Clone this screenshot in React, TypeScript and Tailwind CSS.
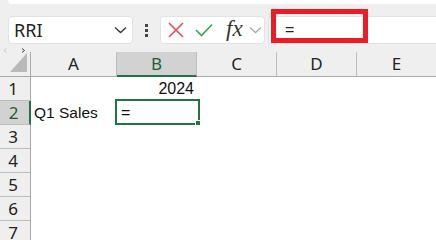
import React from "react";

const cols = [
  { l: "A", w: "w-[86px]" },
  { l: "B", w: "w-[80px]" },
  { l: "C", w: "w-[80px]" },
  { l: "D", w: "w-[80px]" },
  { l: "E", w: "w-[80px]" },
];

export default function App() {
  const rows = [1, 2, 3, 4, 5, 6, 7];
  return (
    <div className="w-[436px] h-[240px] overflow-hidden bg-[#efefef] relative font-['Noto_Sans',sans-serif]">
      <div className="ml-[8px] h-[4px] bg-white rounded-bl-[6px]" />
      {/* formula bar */}
      <div className="flex items-start h-[28px] mt-[12px]">
        <div className="ml-[8px] w-[125px] h-[28px] bg-white rounded-[4px] border border-[#e2e2e2] flex items-center justify-between pl-[5px] pr-[5px]">
          <span className="text-[18px] text-[#222] leading-none">RRI</span>
          <svg width="13" height="8" viewBox="0 0 13 8">
            <path d="M1 1.5 L6.5 6.5 L12 1.5" fill="none" stroke="#333" strokeWidth="1.3" />
          </svg>
        </div>
        <div className="w-[27px] h-[28px] flex flex-col items-center justify-center gap-[2px]">
          <div className="w-[3px] h-[3px] bg-[#444]" />
          <div className="w-[3px] h-[3px] bg-[#444]" />
          <div className="w-[3px] h-[3px] bg-[#444]" />
        </div>
        <div className="w-[105px] h-[28px] bg-white rounded-[4px] border border-[#e2e2e2] flex items-center pl-[7px]">
          <svg width="16" height="16" viewBox="0 0 16 16">
            <path d="M1 1 L15 15 M15 1 L1 15" stroke="#e5484d" strokeWidth="1.5" fill="none" />
          </svg>
          <svg width="18" height="14" viewBox="0 0 18 14" className="ml-[11px]">
            <path d="M1 7 L6.5 12.5 L17 1.5" stroke="#3da34a" strokeWidth="1.6" fill="none" />
          </svg>
          <span className="ml-[13px] font-['Liberation_Serif',serif] italic text-[23px] leading-none text-[#333] -mt-[3px]">fx</span>
          <svg width="13" height="8" viewBox="0 0 13 8" className="ml-[6px]">
            <path d="M1 1.5 L6.5 6.5 L12 1.5" fill="none" stroke="#a8a8a8" strokeWidth="1.3" />
          </svg>
        </div>
        <div className="ml-[3px] flex-1 h-[28px] bg-white rounded-l-[4px] border border-[#e2e2e2] border-r-0 flex items-center pl-[16px]">
          <span className="font-['Liberation_Sans',sans-serif] text-[16px] text-[#222]">=</span>
        </div>
      </div>
      <div className="absolute left-[271px] top-[9px] w-[97px] h-[34px] border-[5px] border-[#ed1c24]" />
      {/* scroll arrows */}
      <div className="h-[8px] relative">
        <svg width="5" height="5" viewBox="0 0 5 5" className="absolute left-[3px] top-[4px]">
          <path d="M3.5 0.5 L1 2.5 L3.5 4.5" stroke="#c4c4c4" strokeWidth="1" fill="none" />
        </svg>
        <svg width="5" height="5" viewBox="0 0 5 5" className="absolute left-[21px] top-[4px]">
          <path d="M1 0.5 L3.5 2.5 L1 4.5" stroke="#444" strokeWidth="1" fill="none" />
        </svg>
      </div>
      {/* header row */}
      <div className="flex h-[25px]">
        <div className="w-[31px] h-[25px] border-r border-b border-[#a9a9a9] bg-[#efefef]">
          <svg width="30" height="24" viewBox="0 0 30 24">
            <polygon points="27,1 27,20 10,20" fill="#b9b9b9" />
          </svg>
        </div>
        {cols.map((c) =>
          c.l === "B" ? (
            <div key={c.l} className={`${c.w} h-[25px] shrink-0 bg-[#d2d2d2] border-r border-r-[#bdbdbd] border-b-2 border-b-[#217346] flex items-center justify-center text-[17px] text-[#1d5e38]`}>
              {c.l}
            </div>
          ) : (
            <div key={c.l} className={`${c.w} h-[25px] shrink-0 bg-[#efefef] border-r border-r-[#bdbdbd] border-b border-b-[#a9a9a9] flex items-center justify-center text-[17px] text-[#222]`}>
              {c.l}
            </div>
          )
        )}
      </div>
      {/* rows */}
      {rows.map((r) => (
        <div key={r} className="flex h-[24px] bg-white">
          {r === 2 ? (
            <div className="w-[31px] h-[24px] shrink-0 bg-[#d2d2d2] border-r-2 border-r-[#217346] border-b border-b-[#bdbdbd] flex items-center justify-center pr-[2px] text-[17px] text-[#1d5e38]">
              {r}
            </div>
          ) : (
            <div className="w-[31px] h-[24px] shrink-0 bg-[#efefef] border-r border-r-[#a9a9a9] border-b border-b-[#bdbdbd] flex items-center justify-center pr-[4px] text-[17px] text-[#222]">
              {r}
            </div>
          )}
          <div className="w-[86px] h-[24px] shrink-0 flex items-center pl-[3px] font-['Liberation_Sans',sans-serif] text-[15.5px] text-[#111]">
            {r === 2 ? "Q1 Sales" : ""}
          </div>
          <div className="w-[80px] h-[24px] shrink-0 relative flex items-center font-['Liberation_Sans',sans-serif] text-[16px] text-[#111]">
            {r === 1 && <span className="ml-auto pr-[3px]">2024</span>}
            {r === 2 && (
              <>
                <span className="pl-[4px]">=</span>
                <div className="absolute -left-[2px] -top-[2px] -right-[3px] bottom-0 border-2 border-[#217346]" />
                <div className="absolute -right-[4px] -bottom-[1px] w-[6px] h-[6px] bg-[#217346] border border-white" />
              </>
            )}
          </div>
          <div className="flex-1" />
        </div>
      ))}
    </div>
  );
}
